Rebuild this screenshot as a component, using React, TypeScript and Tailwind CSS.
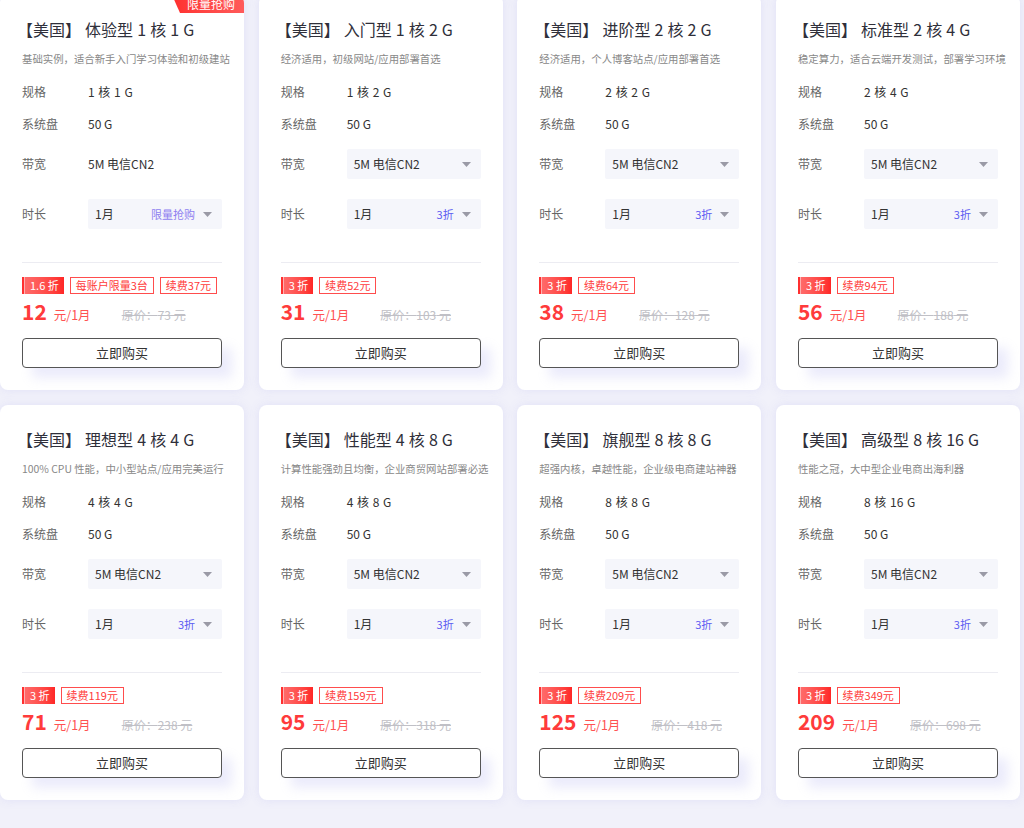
import React from "react";

interface Plan {
    name: string;
    spec: string;
    desc: string;
    renew: string;
    price: string;
    original: string;
}

const plans: Plan[] = [
    { name: "体验型", spec: "1 核 1 G", desc: "基础实例，适合新手入门学习体验和初级建站", renew: "续费37元", price: "12", original: "73" },
    { name: "入门型", spec: "1 核 2 G", desc: "经济适用，初级网站/应用部署首选", renew: "续费52元", price: "31", original: "103" },
    { name: "进阶型", spec: "2 核 2 G", desc: "经济适用，个人博客站点/应用部署首选", renew: "续费64元", price: "38", original: "128" },
    { name: "标准型", spec: "2 核 4 G", desc: "稳定算力，适合云端开发测试，部署学习环境", renew: "续费94元", price: "56", original: "188" },
    { name: "理想型", spec: "4 核 4 G", desc: "100% CPU 性能，中小型站点/应用完美运行", renew: "续费119元", price: "71", original: "238" },
    { name: "性能型", spec: "4 核 8 G", desc: "计算性能强劲且均衡，企业商贸网站部署必选", renew: "续费159元", price: "95", original: "318" },
    { name: "旗舰型", spec: "8 核 8 G", desc: "超强内核，卓越性能，企业级电商建站神器", renew: "续费209元", price: "125", original: "418" },
    { name: "高级型", spec: "8 核 16 G", desc: "性能之冠，大中型企业电商出海利器", renew: "续费349元", price: "209", original: "698" },
];

function Caret() {
    return (
        <svg width="9" height="5" viewBox="0 0 9 5" className="shrink-0">
            <path d="M0 0h9L4.5 5z" fill="#9a9aa6" />
        </svg>
    );
}

function Select({ value, hint, hintClass }: { value: string; hint?: string; hintClass?: string }) {
    return (
        <div className="flex h-[30px] w-[134px] items-center rounded-[2px] bg-[#f5f6fb] pl-[7px] pr-[10px] text-[12px] text-[#333]">
            <span className="flex-1">{value}</span>
            {hint && <span className={`mr-[8px] text-[11px] ${hintClass}`}>{hint}</span>}
            <Caret />
        </div>
    );
}

function PlanCard({ plan, promo }: { plan: Plan; promo: boolean }) {
    return (
        <div className="relative flex h-[395px] flex-col rounded-[8px] bg-white px-[22px] pt-[22px] shadow-[0_0_10px_rgba(222,222,246,0.9)]">
            {promo && (
                <div className="absolute right-0 top-0 flex h-[18px] w-[72px] items-center justify-end rounded-tr-[8px] bg-gradient-to-r from-[#ff2e2e] to-[#ff5a5a] pr-[9px] text-[12px] text-white [clip-path:polygon(0_0,100%_0,100%_100%,8px_100%)]">
                    限量抢购
                </div>
            )}
            <div className="-ml-[5px] h-[24px] text-[16px] leading-[24px] text-[#2f2f3a] [word-spacing:0.5px]">
                【美国】 {plan.name} {plan.spec}
            </div>
            <div className="mt-[10px] h-[16px] whitespace-nowrap text-[10.4px] leading-[16px] text-[#888]">{plan.desc}</div>

            <div className="mt-[16px] flex h-[18px] items-center text-[12px]">
                <span className="w-[66px] text-[#666]">规格</span>
                <span className="text-[#333] [word-spacing:1px]">{plan.spec}</span>
            </div>
            <div className="mt-[14px] flex h-[18px] items-center text-[12px]">
                <span className="w-[66px] text-[#666]">系统盘</span>
                <span className="text-[#333]">50 G</span>
            </div>
            <div className="mt-[16px] flex h-[30px] items-center text-[12px]">
                <span className="w-[66px] text-[#666]">带宽</span>
                {promo ? <span className="text-[#333]">5M 电信CN2</span> : <Select value="5M 电信CN2" />}
            </div>
            <div className="mt-[20px] flex h-[30px] items-center text-[12px]">
                <span className="w-[66px] text-[#666]">时长</span>
                {promo ? (
                    <Select value="1月" hint="限量抢购" hintClass="text-[#8f7ff0]" />
                ) : (
                    <Select value="1月" hint="3折" hintClass="text-[#5d5cf2]" />
                )}
            </div>

            <div className="mt-[33px] h-px bg-[#ececf2]" />

            <div className="mt-[14px] flex h-[17px] items-center gap-[6px] text-[11px]">
                <div className="flex h-[17px] items-stretch">
                    <span className="w-[2px] bg-[#ff3030]" />
                    <span className="w-px bg-[#ffb0b0]" />
                    <span className="flex items-center bg-gradient-to-r from-[#ff6a6a] to-[#ff2626] px-[5px] text-white">
                        {promo ? "1.6 折" : "3 折"}
                    </span>
                </div>
                {promo && (
                    <span className="flex h-[17px] items-center border border-[#ff4d4d] px-[5px] text-[#ff3b3b]">每账户限量3台</span>
                )}
                <span className="flex h-[17px] items-center border border-[#ff4d4d] px-[5px] text-[#ff3b3b]">{plan.renew}</span>
            </div>

            <div className="mt-[3px] flex h-[28px] items-baseline">
                <span className="text-[21px] font-bold leading-[28px] text-[#ff3b3b]">{plan.price}</span>
                <span className="ml-[7px] text-[12.5px] text-[#ff5252]">元/1月</span>
                <span className="ml-[31px] text-[12px] text-[#c0c0c6] line-through">原价：{plan.original} 元</span>
            </div>

            <button className="mt-[13px] h-[30px] w-full rounded-[4px] border border-[#555] bg-white text-[13px] text-[#333] shadow-[10px_10px_12px_rgba(232,232,250,0.85)]">
                立即购买
            </button>
        </div>
    );
}

export default function App() {
    return (
        <div className="h-[828px] overflow-hidden bg-[#f1f1fa] font-['Noto_Sans_CJK_SC',sans-serif]">
            <div className="-mt-[5px] grid grid-cols-[repeat(4,244px)] gap-x-[14.67px] gap-y-[15px]">
                {plans.map((p, i) => (
                    <PlanCard key={p.name} plan={p} promo={i === 0} />
                ))}
            </div>
        </div>
    );
}
